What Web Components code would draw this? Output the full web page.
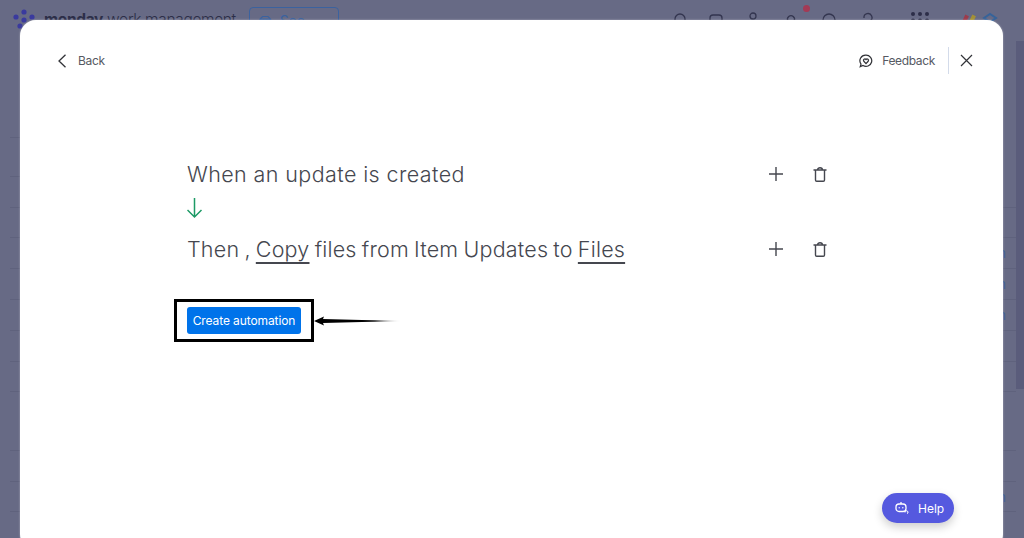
<!DOCTYPE html>
<html>
<head>
<meta charset="utf-8">
<title>Automation</title>
<style>
  html, body { margin: 0; height: 100%; overflow: hidden; background: #676a85; }
</style>
</head>
<body>

<app-backdrop></app-backdrop>

<modal-dialog>
  <automation-row style="letter-spacing:.4px">When an update is created</automation-row>
  <flow-arrow></flow-arrow>
  <automation-row style="letter-spacing:.2px;word-spacing:-1.100px">Then , <u>Copy</u> files from Item Updates to <u>Files</u></automation-row>
  <callout-button>Create automation</callout-button>
</modal-dialog>

<script>
// page behind the dialog, dimmed by the overlay colour
class AppBackdrop extends HTMLElement {
  constructor() {
    super();
    this.attachShadow({ mode: 'open' });
  }

  connectedCallback() {
    // [extra class, text, height]
    const rows = [
      ['left', '', 40], ['left', '', 39],
      ['', '', 31], ['', '', 30], ['', 'Column', 31], ['', 'Column', 31], ['', 'Column', 31], ['', '', 31], ['', '', 30],
      ['none', '', 29], ['', '', 30], ['', '', 31], ['', 'Column', 30]
    ];

    this.shadowRoot.innerHTML = `
    <style>
      :host { display: block; height: 538px; overflow: hidden; font-family: Inter, "Liberation Sans", sans-serif; }
      header { height: 41px; display: flex; align-items: flex-start; box-sizing: border-box; padding: 5px 0 0 12px; }
      .logo { width: 26px; height: 28px; flex: none; }
      .name { font-size: 15.500px; line-height: 20px; letter-spacing: -.35px; margin: 5px 0 0 6px; color: #2c2e48; white-space: nowrap; width: 205px; flex: none; font-weight: 300; }
      .name b { font-weight: 700; }
      .plans { flex: none; width: 90px; height: 30px; margin-top: 2px; box-sizing: border-box; border: 1px solid #3b629f; border-radius: 4px; color: #3b629f; font-size: 14px; display: flex; gap: 8px; padding: 4px 0 0 9px; }
      .tools { flex: 1; display: flex; padding: 7px 0 0 323px; }
      .tools svg { flex: none; display: block; }
      .dot { position: absolute; left: 803px; top: 5px; width: 7px; height: 7px; border-radius: 50%; background: #a33a55; }
      .board { height: 500px; padding-top: 57px; position: relative; }
      .bar { position: absolute; right: 0; top: 0; width: 8px; height: 348px; background: #5a5c7b; }
      .row { box-sizing: border-box; margin: 0 8px 0 10px; border-bottom: 1px solid #5f627d; text-align: right; padding-right: 10px; color: #3d5c96; font-size: 13px; line-height: 30px; overflow: hidden; }
      .row.left { margin-right: 1004px; }
      .row.none { border-color: transparent; }
    </style>
    <header>
      <svg class="logo" viewBox="0 0 26 28" fill="#3a3a9e">
        <circle cx="12" cy="7" r="2.600"/><circle cx="4" cy="12" r="2.600"/><circle cx="20" cy="12" r="2.600"/>
        <circle cx="12" cy="15" r="2.600"/><circle cx="8" cy="21" r="2.600"/>
      </svg>
      <div class="name"><b>monday</b> work management</div>
      <div class="plans">
        <svg width="14" height="12" viewBox="0 0 14 12" fill="none" stroke="#3b629f" stroke-width="1.300" style="margin-top:3px"><path d="M1 4l3-3h6l3 3-6 7z M1 4h12 M5 4l2 7 2-7"/></svg>
        <span>See plans</span>
      </div>
      <div class="tools">
        <svg width="36" height="20" viewBox="0 0 36 20" fill="none" stroke="#33354f" stroke-width="1.300"><path d="M13 18V7a5 5 0 0 1 10 0v11"/></svg>
        <svg width="36" height="20" viewBox="0 0 36 20" fill="none" stroke="#33354f" stroke-width="1.300"><rect x="12" y="3" width="12" height="14" rx="3"/></svg>
        <svg width="38" height="20" viewBox="0 0 38 20" fill="none" stroke="#33354f" stroke-width="1.300"><circle cx="19" cy="4" r="3"/><path d="M13 20c1-6 11-6 12 0"/></svg>
        <svg width="38" height="20" viewBox="0 0 38 20" fill="none" stroke="#33354f" stroke-width="1.300"><path d="M13 18V9h3a3.500 3.500 0 1 1 6 0h3v9"/></svg>
        <svg width="38" height="20" viewBox="0 0 38 20" fill="none" stroke="#33354f" stroke-width="1.300"><circle cx="19" cy="8" r="6"/></svg>
        <svg width="40" height="20" viewBox="0 0 40 20" fill="none" stroke="#33354f" stroke-width="1.300"><path d="M16 6a4 4 0 1 1 6 3l-2 2v4"/></svg>
        <svg width="64" height="20" viewBox="0 0 64 20" fill="#2c2e48"><circle cx="25" cy="2" r="2"/><circle cx="32" cy="2" r="2"/><circle cx="39" cy="2" r="2"/><circle cx="25" cy="8.500" r="2"/><circle cx="32" cy="8.500" r="2"/><circle cx="39" cy="8.500" r="2"/></svg>
        <svg width="26" height="20" viewBox="0 0 26 20"><rect x="11" y="3" width="4" height="9" fill="#9c3b4c" transform="rotate(25 13 8)"/><rect x="18" y="3" width="4" height="9" fill="#a39036" transform="rotate(25 20 8)"/></svg>
        <svg width="24" height="20" viewBox="0 0 24 20" fill="none" stroke="#36639a" stroke-width="2"><path d="M6 6l6-4 6 4-6 4z"/></svg>
      </div>
      <span class="dot"></span>
    </header>
    <div class="board">
      <div class="bar"></div>
      ${rows.map(r => `<div class="row ${r[0]}" style="height:${r[2]}px">${r[1]}</div>`).join('')}
    </div>`;
  }
}

class ModalDialog extends HTMLElement {
  constructor() {
    super();
    this.attachShadow({ mode: 'open' });
    this.shadowRoot.innerHTML = `
    <style>
      :host { position: absolute; left: 20px; top: 20px; width: 983px; height: 530px; background: #fff; border-radius: 16px; box-shadow: 0 0 2px rgba(255,255,255,.5); color: #323338; font-family: Inter, "Liberation Sans", sans-serif; }
      header { display: flex; align-items: center; height: 55px; margin-top: 13px; padding: 0 30px 0 37px; }
      .back, .feedback { display: flex; align-items: center; font-size: 12px; letter-spacing: -.35px; color: #565962; }
      .back { gap: 11px; }
      .feedback { gap: 9px; margin-left: auto; height: 100%; }
      .sep { width: 1px; height: 27px; background: #d3dbea; margin: 0 11px 0 13px; }
      svg { display: block; flex: none; }
      main { padding: 70px 0 0 167px; display: flex; flex-direction: column; align-items: flex-start; }
      .help { position: absolute; left: 862px; top: 473px; width: 72px; height: 30px; box-sizing: border-box; padding-left: 13px; border-radius: 15px; background: #5559df; color: #fff; font-size: 12px; display: flex; align-items: center; gap: 9px; box-shadow: 0 4px 10px rgba(0,0,0,.2); }
    </style>
    <header>
      <div class="back">
        <svg width="10" height="14" viewBox="0 0 10 14" fill="none" stroke="#323338" stroke-width="1.300"><path d="M8.500 .800 L2 7 L8.500 13.200"/></svg>
        <span>Back</span>
      </div>
      <div class="feedback">
        <svg width="14" height="14" viewBox="0 0 16 16" fill="none" stroke="#323338" stroke-width="1.400"><path d="M8 1.200a6.500 6.500 0 1 1-3.400 12L1.400 14.500l.9-3A6.500 6.500 0 0 1 8 1.200z"/><path d="M8 11 5.500 8.300a1.600 1.600 0 0 1 2.500-2 1.600 1.600 0 0 1 2.500 2z"/></svg>
        <span>Feedback</span>
      </div>
      <div class="sep"></div>
      <svg width="13" height="13" viewBox="0 0 13 13" fill="none" stroke="#323338" stroke-width="1.200"><path d="M1 1l11 11M12 1L1 12"/></svg>
    </header>
    <main><slot></slot></main>
    <div class="help">
      <svg width="14" height="14" viewBox="0 0 14 14" fill="none" stroke="#fff" stroke-width="1.300"><rect x="1" y="3" width="10" height="7.500" rx="3"/><path d="M6 3V1"/><circle cx="4.200" cy="6.700" r=".7" fill="#fff" stroke="none"/><circle cx="7.800" cy="6.700" r=".7" fill="#fff" stroke="none"/><path d="M10 11.500a1.500 1.500 0 1 1 2 1.200" stroke-width="1"/></svg>
      <span>Help</span>
    </div>`;
  }
}

class AutomationRow extends HTMLElement {
  constructor() {
    super();
    this.attachShadow({ mode: 'open' });
    this.shadowRoot.innerHTML = `
    <style>
      :host { display: flex; align-items: center; width: 640px; height: 32px; color: #45474f; font: 300 21.500px/32px Inter, "Open Sans", sans-serif; white-space: nowrap; }
      .text { flex: 1; }
      ::slotted(u) { text-underline-offset: 5px; text-decoration-skip-ink: none; text-decoration-thickness: 1.500px; }
      svg { display: block; flex: none; }
      .plus { margin-right: 30px; }
    </style>
    <div class="text"><slot></slot></div>
    <svg class="plus" width="14" height="14" viewBox="0 0 14 14" fill="none" stroke="#45474f" stroke-width="1.400"><path d="M7 0v14M0 7h14"/></svg>
    <svg width="14" height="15" viewBox="0 0 14 15" fill="none" stroke="#45474f" stroke-width="1.400"><path d="M.5 3h13M2.500 3v10a1.200 1.200 0 0 0 1.200 1.200h6.600a1.200 1.200 0 0 0 1.200-1.200V3M4.500 3c0-3 5-3 5 0"/></svg>`;
  }
}

class FlowArrow extends HTMLElement {
  constructor() {
    super();
    this.attachShadow({ mode: 'open' });
    this.shadowRoot.innerHTML = `
    <style>
      :host { display: block; height: 43px; }
      svg { display: block; margin-top: 7px; }
    </style>
    <svg width="16" height="22" viewBox="0 0 16 22" fill="none" stroke="#1d9a66" stroke-width="1.500"><path d="M7.500 1v19M.5 13l7 7 7-7"/></svg>`;
  }
}

// button with the black marker box and the arrow drawn on the screenshot
class CalloutButton extends HTMLElement {
  constructor() {
    super();
    this.attachShadow({ mode: 'open' });
    this.shadowRoot.innerHTML = `
    <style>
      :host { display: flex; align-items: center; margin: 34px 0 0 -13px; }
      .box { border: 3px solid #000; padding: 5px 10px; }
      button { display: block; width: 114px; height: 27px; border: 0; padding: 0; border-radius: 3px; background: #0073ea; color: #fff; font: 12px Inter, sans-serif; letter-spacing: -.1px; }
      svg { display: block; }
    </style>
    <div class="box"><button><slot></slot></button></div>
    <svg width="87" height="14" viewBox="0 0 87 14">
      <defs><linearGradient id="tail"><stop offset="0" stop-color="#000"/><stop offset=".7" stop-color="#000"/><stop offset="1" stop-color="#000" stop-opacity="0"/></linearGradient></defs>
      <path d="M0 7 L10 2.500 L9 5 L87 7 L9 9 L10 11.500 Z" fill="url(#tail)"/>
    </svg>`;
  }
}

customElements.define('app-backdrop', AppBackdrop);
customElements.define('modal-dialog', ModalDialog);
customElements.define('automation-row', AutomationRow);
customElements.define('flow-arrow', FlowArrow);
customElements.define('callout-button', CalloutButton);
</script>
</body>
</html>
